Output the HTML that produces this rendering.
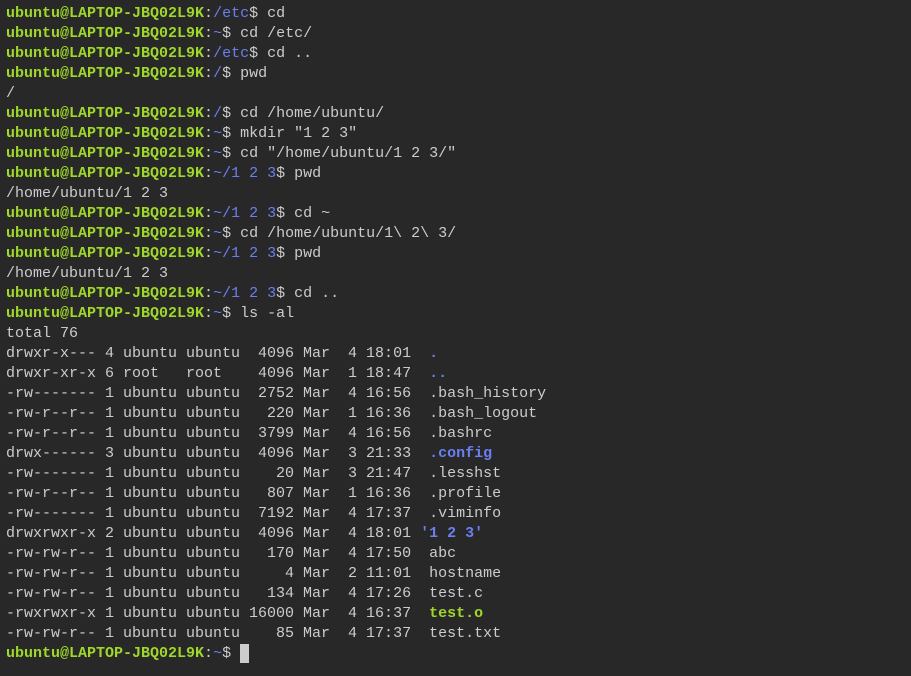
<!DOCTYPE html>
<html><head><meta charset="utf-8"><style>
html,body{margin:0;padding:0;}
body{width:911px;height:676px;overflow:hidden;background:#282828;}
pre{margin:0;position:absolute;left:6px;top:4px;font-family:"Liberation Mono","DejaVu Sans Mono",monospace;font-size:15px;line-height:20px;color:#cccccc;}
.g{color:#9fd82a;font-weight:bold}
.b{color:#6b7ff2}
.bb{color:#6b7ff2;font-weight:bold}
.cur{display:inline-block;width:9px;height:19px;background:#cccccc;vertical-align:top;margin-top:0px}
</style></head><body><pre><span class="g">ubuntu@LAPTOP-JBQ02L9K</span>:<span class="b">/etc</span>$ cd
<span class="g">ubuntu@LAPTOP-JBQ02L9K</span>:<span class="b">~</span>$ cd /etc/
<span class="g">ubuntu@LAPTOP-JBQ02L9K</span>:<span class="b">/etc</span>$ cd ..
<span class="g">ubuntu@LAPTOP-JBQ02L9K</span>:<span class="b">/</span>$ pwd
/
<span class="g">ubuntu@LAPTOP-JBQ02L9K</span>:<span class="b">/</span>$ cd /home/ubuntu/
<span class="g">ubuntu@LAPTOP-JBQ02L9K</span>:<span class="b">~</span>$ mkdir "1 2 3"
<span class="g">ubuntu@LAPTOP-JBQ02L9K</span>:<span class="b">~</span>$ cd "/home/ubuntu/1 2 3/"
<span class="g">ubuntu@LAPTOP-JBQ02L9K</span>:<span class="b">~/1 2 3</span>$ pwd
/home/ubuntu/1 2 3
<span class="g">ubuntu@LAPTOP-JBQ02L9K</span>:<span class="b">~/1 2 3</span>$ cd ~
<span class="g">ubuntu@LAPTOP-JBQ02L9K</span>:<span class="b">~</span>$ cd /home/ubuntu/1\ 2\ 3/
<span class="g">ubuntu@LAPTOP-JBQ02L9K</span>:<span class="b">~/1 2 3</span>$ pwd
/home/ubuntu/1 2 3
<span class="g">ubuntu@LAPTOP-JBQ02L9K</span>:<span class="b">~/1 2 3</span>$ cd ..
<span class="g">ubuntu@LAPTOP-JBQ02L9K</span>:<span class="b">~</span>$ ls -al
total 76
drwxr-x--- 4 ubuntu ubuntu  4096 Mar  4 18:01  <span class="bb">.</span>
drwxr-xr-x 6 root   root    4096 Mar  1 18:47  <span class="bb">..</span>
-rw------- 1 ubuntu ubuntu  2752 Mar  4 16:56  .bash_history
-rw-r--r-- 1 ubuntu ubuntu   220 Mar  1 16:36  .bash_logout
-rw-r--r-- 1 ubuntu ubuntu  3799 Mar  4 16:56  .bashrc
drwx------ 3 ubuntu ubuntu  4096 Mar  3 21:33  <span class="bb">.config</span>
-rw------- 1 ubuntu ubuntu    20 Mar  3 21:47  .lesshst
-rw-r--r-- 1 ubuntu ubuntu   807 Mar  1 16:36  .profile
-rw------- 1 ubuntu ubuntu  7192 Mar  4 17:37  .viminfo
drwxrwxr-x 2 ubuntu ubuntu  4096 Mar  4 18:01 <span class="bb">'1 2 3'</span>
-rw-rw-r-- 1 ubuntu ubuntu   170 Mar  4 17:50  abc
-rw-rw-r-- 1 ubuntu ubuntu     4 Mar  2 11:01  hostname
-rw-rw-r-- 1 ubuntu ubuntu   134 Mar  4 17:26  test.c
-rwxrwxr-x 1 ubuntu ubuntu 16000 Mar  4 16:37  <span class="g">test.o</span>
-rw-rw-r-- 1 ubuntu ubuntu    85 Mar  4 17:37  test.txt
<span class="g">ubuntu@LAPTOP-JBQ02L9K</span>:<span class="b">~</span>$ <span class="cur"></span></pre></body></html>
